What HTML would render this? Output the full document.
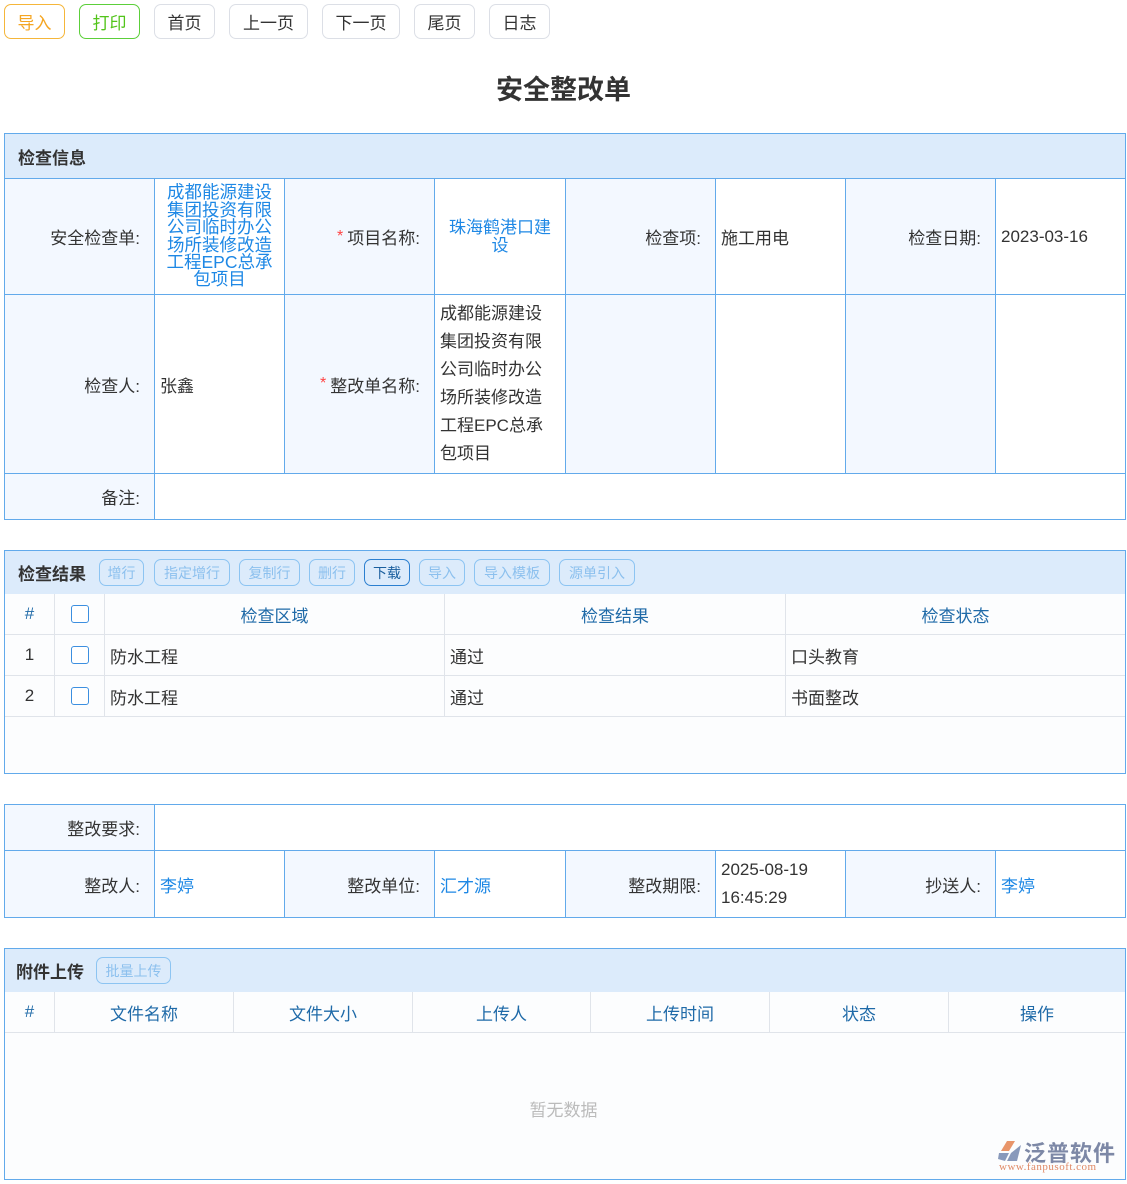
<!DOCTYPE html>
<html><head><meta charset="utf-8">
<style>
*{margin:0;padding:0;box-sizing:border-box}
body{width:1127px;height:1184px;position:relative;background:#fff;font-family:"Liberation Sans","Noto Sans CJK SC",sans-serif;color:#333;font-size:17px;overflow:hidden}
.a{position:absolute}
.btn{position:absolute;top:4px;height:35px;border:1px solid #dcdfe6;border-radius:7px;display:flex;align-items:center;justify-content:center;font-size:17px;color:#333;background:#fff}
.c{position:absolute;border:1px solid #62aaeb;display:flex;align-items:center;background:#fff}
.l{background:#f3f8ff;justify-content:flex-end;padding-right:14px}
.v{padding-left:5px}
.hd{position:absolute;left:4px;width:1122px;height:46px;background:#dcebfb;border:1px solid #62aaeb;display:flex;align-items:center;padding-left:13px;font-weight:bold;font-size:17px;color:#333}
.sb{height:27px;border:1px solid #8cc4f2;border-radius:7px;font-size:14px;color:#8cc0ee;font-weight:normal;display:flex;align-items:center;justify-content:center;position:absolute;top:8px;background:transparent}
.g{position:absolute;border-right:1px solid #e0e4ea;border-bottom:1px solid #e0e4ea;display:flex;align-items:center;background:#fcfdfe}
.th{justify-content:center;color:#1f6aa8}
.blue{color:#1e88e5}
.star{color:#f44;margin-right:4px;font-size:16px}
.cb{width:18px;height:18px;border:1.5px solid #3c8fe0;border-radius:3px;background:#fff}
</style></head><body>
<div class="btn" style="left:4px;width:61px;border-color:#f5b63a;color:#f5a623">导入</div>
<div class="btn" style="left:79px;width:61px;border-color:#5ccf3a;color:#52c41a">打印</div>
<div class="btn" style="left:154px;width:61px">首页</div>
<div class="btn" style="left:229px;width:79px">上一页</div>
<div class="btn" style="left:322px;width:78px">下一页</div>
<div class="btn" style="left:414px;width:61px">尾页</div>
<div class="btn" style="left:489px;width:61px">日志</div>
<div class="a" style="left:0;width:1127px;top:68px;text-align:center;font-size:27px;font-weight:bold;color:#333">安全整改单</div>

<div class="hd" style="top:133px">检查信息</div>
<div class="c l" style="left:4px;top:178px;width:151px;height:117px">安全检查单:</div>
<div class="c blue" style="left:154px;top:178px;width:131px;height:117px;justify-content:center;text-align:center;font-size:17.5px;line-height:17.4px;padding:0 8px">成都能源建设集团投资有限公司临时办公场所装修改造工程EPC总承包项目</div>
<div class="c l" style="left:284px;top:178px;width:151px;height:117px"><span class="star">*</span>项目名称:</div>
<div class="c blue" style="left:434px;top:178px;width:132px;height:117px;justify-content:center;text-align:center;line-height:18px;padding:0 10px">珠海鹤港口建设</div>
<div class="c l" style="left:565px;top:178px;width:151px;height:117px">检查项:</div>
<div class="c v" style="left:715px;top:178px;width:131px;height:117px">施工用电</div>
<div class="c l" style="left:845px;top:178px;width:151px;height:117px">检查日期:</div>
<div class="c v" style="left:995px;top:178px;width:131px;height:117px">2023-03-16</div>

<div class="c l" style="left:4px;top:294px;width:151px;height:180px">检查人:</div>
<div class="c v" style="left:154px;top:294px;width:131px;height:180px">张鑫</div>
<div class="c l" style="left:284px;top:294px;width:151px;height:180px"><span class="star">*</span>整改单名称:</div>
<div class="c v" style="left:434px;top:294px;width:132px;height:180px;line-height:28px;padding-right:14px">成都能源建设集团投资有限公司临时办公场所装修改造工程EPC总承包项目</div>
<div class="c l" style="left:565px;top:294px;width:151px;height:180px"></div>
<div class="c" style="left:715px;top:294px;width:131px;height:180px"></div>
<div class="c l" style="left:845px;top:294px;width:151px;height:180px"></div>
<div class="c" style="left:995px;top:294px;width:131px;height:180px"></div>

<div class="c l" style="left:4px;top:473px;width:151px;height:47px">备注:</div>
<div class="c" style="left:154px;top:473px;width:972px;height:47px"></div>

<div class="a" style="left:4px;top:550px;width:1122px;height:224px;border:1px solid #62aaeb;background:#fcfdfe"></div>
<div class="hd" style="top:550px;height:45px">检查结果
<div class="sb" style="left:94px;width:45px">增行</div>
<div class="sb" style="left:149px;width:76px">指定增行</div>
<div class="sb" style="left:234px;width:61px">复制行</div>
<div class="sb" style="left:304px;width:46px">删行</div>
<div class="sb" style="left:359px;width:46px;border-color:#2b7fd0;color:#1a5f9e">下载</div>
<div class="sb" style="left:414px;width:46px">导入</div>
<div class="sb" style="left:469px;width:76px">导入模板</div>
<div class="sb" style="left:554px;width:76px">源单引入</div>
</div>
<div class="g th" style="left:5px;top:594px;width:50px;height:41px">#</div>
<div class="g th" style="left:55px;top:594px;width:50px;height:41px"><div class="cb"></div></div>
<div class="g th" style="left:105px;top:594px;width:340px;height:41px">检查区域</div>
<div class="g th" style="left:445px;top:594px;width:341px;height:41px">检查结果</div>
<div class="g th" style="left:786px;top:594px;width:339px;height:41px;border-right:none">检查状态</div>
<div class="g" style="left:5px;top:635px;width:50px;height:41px;justify-content:center">1</div>
<div class="g" style="left:55px;top:635px;width:50px;height:41px;justify-content:center"><div class="cb"></div></div>
<div class="g v" style="left:105px;top:635px;width:340px;height:41px">防水工程</div>
<div class="g v" style="left:445px;top:635px;width:341px;height:41px">通过</div>
<div class="g v" style="left:786px;top:635px;width:339px;height:41px;border-right:none">口头教育</div>
<div class="g" style="left:5px;top:676px;width:50px;height:41px;justify-content:center">2</div>
<div class="g" style="left:55px;top:676px;width:50px;height:41px;justify-content:center"><div class="cb"></div></div>
<div class="g v" style="left:105px;top:676px;width:340px;height:41px">防水工程</div>
<div class="g v" style="left:445px;top:676px;width:341px;height:41px">通过</div>
<div class="g v" style="left:786px;top:676px;width:339px;height:41px;border-right:none">书面整改</div>

<div class="c l" style="left:4px;top:804px;width:151px;height:47px">整改要求:</div>
<div class="c" style="left:154px;top:804px;width:972px;height:47px"></div>
<div class="c l" style="left:4px;top:850px;width:151px;height:68px">整改人:</div>
<div class="c v blue" style="left:154px;top:850px;width:131px;height:68px">李婷</div>
<div class="c l" style="left:284px;top:850px;width:151px;height:68px">整改单位:</div>
<div class="c v blue" style="left:434px;top:850px;width:132px;height:68px">汇才源</div>
<div class="c l" style="left:565px;top:850px;width:151px;height:68px">整改期限:</div>
<div class="c v" style="left:715px;top:850px;width:131px;height:68px;line-height:28px">2025-08-19 16:45:29</div>
<div class="c l" style="left:845px;top:850px;width:151px;height:68px">抄送人:</div>
<div class="c v blue" style="left:995px;top:850px;width:131px;height:68px">李婷</div>

<div class="a" style="left:4px;top:948px;width:1122px;height:232px;border:1px solid #62aaeb;background:#fcfdfe"></div>
<div class="hd" style="top:948px;height:45px;padding-left:11px">附件上传
<div class="sb" style="left:91px;width:75px">批量上传</div>
</div>
<div class="g th" style="left:5px;top:992px;width:50px;height:41px">#</div>
<div class="g th" style="left:55px;top:992px;width:179px;height:41px">文件名称</div>
<div class="g th" style="left:234px;top:992px;width:179px;height:41px">文件大小</div>
<div class="g th" style="left:413px;top:992px;width:178px;height:41px">上传人</div>
<div class="g th" style="left:591px;top:992px;width:179px;height:41px">上传时间</div>
<div class="g th" style="left:770px;top:992px;width:179px;height:41px">状态</div>
<div class="g th" style="left:949px;top:992px;width:176px;height:41px;border-right:none">操作</div>
<div class="a" style="left:0;width:1127px;top:1096px;text-align:center;color:#bbb;font-size:17px">暂无数据</div>

<svg class="a" style="left:997px;top:1139px" width="28" height="24" viewBox="0 0 28 24">
<path d="M10 2 L18 2 L12 12 L4 12 Z" fill="#e8956a"/>
<path d="M2 14 L12 14 L8 22 L1 20 Z" fill="#8899bb"/>
<path d="M14 14 L24 6 L20 22 L10 22 Z" fill="#8899bb"/>
</svg>
<div class="a" style="left:1024px;top:1136px;font-size:22px;color:#7d88a6;letter-spacing:1px;font-weight:bold">泛普软件</div>
<div class="a" style="left:999px;top:1161px;font-size:11px;color:#e08a66;font-family:'Liberation Serif',serif;letter-spacing:0.5px">www.fanpusoft.com</div>
</body></html>
